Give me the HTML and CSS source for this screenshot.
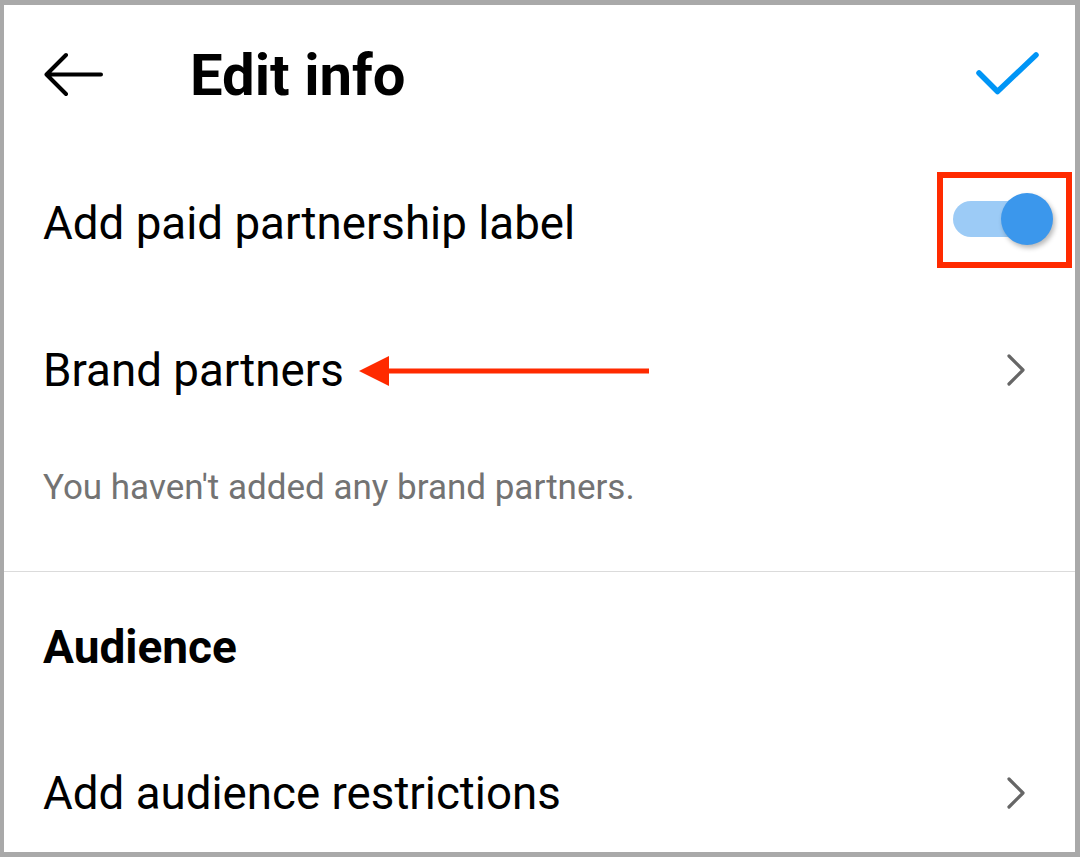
FILE: index.html
```html
<!DOCTYPE html>
<html lang="en">
<head>
  <meta charset="UTF-8" />
  <meta name="viewport" content="width=device-width, initial-scale=1.0" />
  <title>Edit info</title>
  <link rel="stylesheet" href="styles.css">
</head>
<body>
  <div class="screen">
    <div class="topbar">
      <svg class="back" width="60" height="46" viewBox="0 0 60 46">
        <path d="M57 22.5H3M22 3L2.5 22.5L22 42" fill="none" stroke="#000" stroke-width="4" stroke-linecap="round" stroke-linejoin="round"/>
      </svg>
      <h1 class="title">Edit info</h1>
      <svg class="done" width="66" height="48" viewBox="0 0 66 48">
        <path d="M4 22L22.5 40.5L61 4" fill="none" stroke="#0095f6" stroke-width="5.5" stroke-linecap="round" stroke-linejoin="round"/>
      </svg>
    </div>

    <div class="row row-toggle">
      <span class="label">Add paid partnership label</span>
      <div class="switch on">
        <span class="track"></span>
        <span class="knob"></span>
      </div>
      <!-- highlight around the switch -->
      <span class="mark-box"></span>
    </div>

    <div class="row row-link">
      <span class="label">Brand partners</span>
      <svg class="chevron" width="22" height="34" viewBox="0 0 22 34">
        <path d="M3 3L17 17L3 31" fill="none" stroke="#666" stroke-width="3.2" stroke-linecap="round" stroke-linejoin="round"/>
      </svg>
      <!-- pointer to the brand partners row -->
      <svg class="mark-arrow" width="292" height="32" viewBox="0 0 292 32">
        <path d="M0 16L30 1V31Z" fill="#ff2a00"/>
        <path d="M28 16H290" stroke="#ff2a00" stroke-width="5"/>
      </svg>
    </div>

    <p class="hint">You haven't added any brand partners.</p>

    <hr class="divider">

    <div class="row row-section">
      <h2 class="section">Audience</h2>
    </div>

    <div class="row row-last">
      <span class="label">Add audience restrictions</span>
      <svg class="chevron" width="22" height="34" viewBox="0 0 22 34">
        <path d="M3 3L17 17L3 31" fill="none" stroke="#666" stroke-width="3.2" stroke-linecap="round" stroke-linejoin="round"/>
      </svg>
    </div>
  </div>
</body>
</html>
```

FILE: styles.css
```css
* {
  box-sizing: border-box;
}
body {
  margin: 0;
  font-family: Roboto, "Noto Sans", Arial, sans-serif;
  color: #000;
  background: #fff;
}
.screen {
  width: 1080px;
  height: 857px;
  border: 5px solid #a9a9a9;
  border-left-width: 4px;
  background: #fff;
  overflow: hidden;
}
.topbar {
  height: 140px;
  display: flex;
  align-items: center;
  padding: 0 34px 0 40px;
}
.back {
  margin-right: 86px;
}
.title {
  margin: 0;
  font-size: 58px;
  font-weight: 700;
  flex: 1;
}
.row {
  position: relative;
  display: flex;
  align-items: center;
  justify-content: space-between;
  padding: 0 47px 0 39px;
}
.label {
  font-size: 45.7px;
}
.row-toggle {
  height: 150px;
  padding-right: 22px;
}
.row-toggle .label {
  margin-top: 7px;
}
.row-link {
  height: 150px;
}
.row-section {
  height: 150px;
}
.row-last {
  height: 142px;
}
.switch {
  position: relative;
  width: 100px;
  height: 54px;
  margin-top: -3px;
}
.track {
  position: absolute;
  left: 0;
  top: 9px;
  width: 84px;
  height: 36px;
  border-radius: 18px;
  background: #9ccbf6;
}
.knob {
  position: absolute;
  right: 0;
  top: 1px;
  width: 52px;
  height: 52px;
  border-radius: 50%;
  background: #3b97ec;
  box-shadow: 2px 3px 5px rgba(0, 0, 0, 0.28);
}
.mark-box {
  position: absolute;
  left: 933px;
  top: 27px;
  width: 135px;
  height: 96px;
  border: 6px solid #ff2a00;
}
.mark-arrow {
  position: absolute;
  left: 355px;
  top: 60px;
}
.hint {
  margin: 0;
  height: 85px;
  display: flex;
  align-items: center;
  padding-left: 39px;
  font-size: 35px;
  color: #737373;
}
.divider {
  margin: 41px 0 0;
  border: 0;
  height: 1px;
  background: #dbdbdb;
}
.section {
  margin: 0;
  font-size: 46px;
  font-weight: 700;
}
```
